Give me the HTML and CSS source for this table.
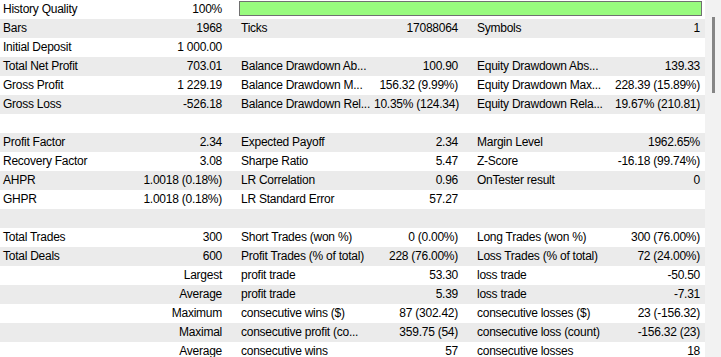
FILE: index.html
```html
<!DOCTYPE html>
<html>
<head>
<meta charset="utf-8">
<link rel="stylesheet" href="styles.css">
</head>
<body>
<div class="view">
  <div class="table">
    <div class="row">
      <div class="cell"><span>History Quality</span><span>100%</span></div>
      <div class="bar"></div>
    </div>
    <div class="row alt">
      <div class="cell"><span>Bars</span><span>1968</span></div>
      <div class="cell"><span>Ticks</span><span>17088064</span></div>
      <div class="cell"><span>Symbols</span><span>1</span></div>
    </div>
    <div class="row">
      <div class="cell"><span>Initial Deposit</span><span>1 000.00</span></div>
      <div class="cell"></div>
      <div class="cell"></div>
    </div>
    <div class="row alt">
      <div class="cell"><span>Total Net Profit</span><span>703.01</span></div>
      <div class="cell"><span>Balance Drawdown Ab...</span><span>100.90</span></div>
      <div class="cell"><span>Equity Drawdown Abs...</span><span>139.33</span></div>
    </div>
    <div class="row">
      <div class="cell"><span>Gross Profit</span><span>1 229.19</span></div>
      <div class="cell"><span>Balance Drawdown M...</span><span>156.32 (9.99%)</span></div>
      <div class="cell"><span>Equity Drawdown Max...</span><span>228.39 (15.89%)</span></div>
    </div>
    <div class="row alt">
      <div class="cell"><span>Gross Loss</span><span>-526.18</span></div>
      <div class="cell"><span>Balance Drawdown Rel...</span><span>10.35% (124.34)</span></div>
      <div class="cell"><span>Equity Drawdown Rela...</span><span>19.67% (210.81)</span></div>
    </div>
    <div class="row"></div>
    <div class="row alt">
      <div class="cell"><span>Profit Factor</span><span>2.34</span></div>
      <div class="cell"><span>Expected Payoff</span><span>2.34</span></div>
      <div class="cell"><span>Margin Level</span><span>1962.65%</span></div>
    </div>
    <div class="row">
      <div class="cell"><span>Recovery Factor</span><span>3.08</span></div>
      <div class="cell"><span>Sharpe Ratio</span><span>5.47</span></div>
      <div class="cell"><span>Z-Score</span><span>-16.18 (99.74%)</span></div>
    </div>
    <div class="row alt">
      <div class="cell"><span>AHPR</span><span>1.0018 (0.18%)</span></div>
      <div class="cell"><span>LR Correlation</span><span>0.96</span></div>
      <div class="cell"><span>OnTester result</span><span>0</span></div>
    </div>
    <div class="row">
      <div class="cell"><span>GHPR</span><span>1.0018 (0.18%)</span></div>
      <div class="cell"><span>LR Standard Error</span><span>57.27</span></div>
      <div class="cell"></div>
    </div>
    <div class="row alt"></div>
    <div class="row">
      <div class="cell"><span>Total Trades</span><span>300</span></div>
      <div class="cell"><span>Short Trades (won %)</span><span>0 (0.00%)</span></div>
      <div class="cell"><span>Long Trades (won %)</span><span>300 (76.00%)</span></div>
    </div>
    <div class="row alt">
      <div class="cell"><span>Total Deals</span><span>600</span></div>
      <div class="cell"><span>Profit Trades (% of total)</span><span>228 (76.00%)</span></div>
      <div class="cell"><span>Loss Trades (% of total)</span><span>72 (24.00%)</span></div>
    </div>
    <div class="row">
      <div class="cell end"><span>Largest</span></div>
      <div class="cell"><span>profit trade</span><span>53.30</span></div>
      <div class="cell"><span>loss trade</span><span>-50.50</span></div>
    </div>
    <div class="row alt">
      <div class="cell end"><span>Average</span></div>
      <div class="cell"><span>profit trade</span><span>5.39</span></div>
      <div class="cell"><span>loss trade</span><span>-7.31</span></div>
    </div>
    <div class="row">
      <div class="cell end"><span>Maximum</span></div>
      <div class="cell"><span>consecutive wins ($)</span><span>87 (302.42)</span></div>
      <div class="cell"><span>consecutive losses ($)</span><span>23 (-156.32)</span></div>
    </div>
    <div class="row alt">
      <div class="cell end"><span>Maximal</span></div>
      <div class="cell"><span>consecutive profit (co...</span><span>359.75 (54)</span></div>
      <div class="cell"><span>consecutive loss (count)</span><span>-156.32 (23)</span></div>
    </div>
    <div class="row">
      <div class="cell end"><span>Average</span></div>
      <div class="cell"><span>consecutive wins</span><span>57</span></div>
      <div class="cell"><span>consecutive losses</span><span>18</span></div>
    </div>
  </div>
  <div class="scroll"><div class="thumb"></div></div>
</div>
</body>
</html>
```
FILE: styles.css
```css
html, body {
  margin: 0;
  padding: 0;
  background: #ffffff;
  overflow: hidden;
}
body {
  font-family: "Liberation Sans", Arial, sans-serif;
  font-size: 12px;
  letter-spacing: -0.25px;
  color: #000000;
}
.view {
  display: flex;
  width: 721px;
  height: 357px;
  overflow: hidden;
}
.table {
  width: 705px;
  flex: none;
}
.row {
  display: grid;
  grid-template-columns: 226px 224px 231px;
  column-gap: 12px;
  height: 19px;
  line-height: 19px;
  background: #ffffff;
}
.row.alt {
  background: #ebebeb;
}
.cell {
  display: flex;
  justify-content: space-between;
  gap: 4px;
  padding: 0 4px 0 3px;
  white-space: nowrap;
  overflow: hidden;
}
.cell:nth-child(3) {
  padding-right: 5px;
}
.cell.end {
  justify-content: flex-end;
}
.bar {
  grid-column: 2 / 4;
  margin: 1px 3px 3px 1px;
  border: 1px solid #707070;
  background: #98fb7e;
}
.scroll {
  width: 16px;
  flex: none;
  background: #f2f2f2;
  padding-top: 17px;
  box-sizing: border-box;
}
.thumb {
  width: 3px;
  height: 76px;
  margin-left: 7px;
  background: #858585;
}
```
